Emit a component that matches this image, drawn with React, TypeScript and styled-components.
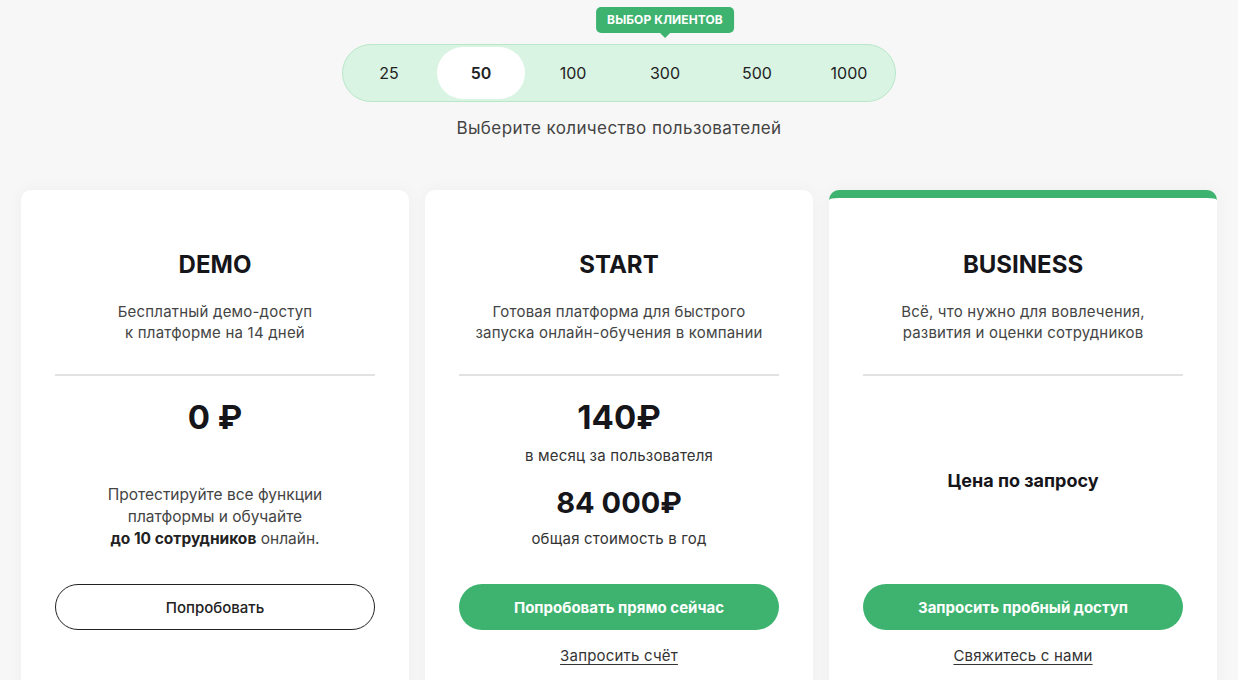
import { useState } from "react";
import styled, { createGlobalStyle } from "styled-components";

const GREEN = "#3db36f";

const GlobalStyle = createGlobalStyle`
  * { box-sizing: border-box; }
  body {
    margin: 0;
    background: #f7f7f7;
    font-family: Inter, "Noto Sans", sans-serif;
    color: #1c1c1c;
  }
`;

const Page = styled.div`
  padding: 44px 21px 0;
  display: flex;
  flex-direction: column;
  align-items: center;
  height: 680px;
  overflow: hidden;
`;

const Switcher = styled.div`
  display: flex;
  padding: 2px 0;
  border: 1px solid #b9e7c9;
  border-radius: 30px;
  background: #d9f4e2;
`;

const Option = styled.button<{ active?: boolean }>`
  position: relative;
  width: 88px;
  height: 52px;
  margin: 0 2px;
  border: none;
  border-radius: 26px;
  background: ${(p) => (p.active ? "#fff" : "transparent")};
  font-family: inherit;
  font-size: 16px;
  font-weight: ${(p) => (p.active ? 600 : 400)};
  color: #222;
  cursor: pointer;
`;

const Badge = styled.span`
  position: absolute;
  left: 50%;
  bottom: calc(100% + 14px);
  transform: translateX(-50%);
  white-space: nowrap;
  padding: 0 11px;
  height: 26px;
  line-height: 26px;
  border-radius: 5px;
  background: ${GREEN};
  color: #fff;
  font-size: 12px;
  font-weight: 700;
  letter-spacing: 0.1px;

  &::after {
    content: "";
    position: absolute;
    left: 50%;
    top: 100%;
    transform: translateX(-50%);
    border-left: 5px solid transparent;
    border-right: 5px solid transparent;
    border-top: 5px solid ${GREEN};
  }
`;

const Hint = styled.p`
  margin: 16px 0 0;
  font-size: 17px;
  letter-spacing: 0.4px;
  color: #444;
`;

const Grid = styled.div`
  width: 1196px;
  margin-top: 52px;
  display: grid;
  grid-template-columns: repeat(3, 1fr);
  gap: 16px;
`;

const Card = styled.div<{ featured?: boolean }>`
  background: #fff;
  border-radius: 10px;
  border-top: ${(p) => (p.featured ? `8px solid ${GREEN}` : "none")};
  padding: ${(p) => (p.featured ? 52 : 60)}px 34px 40px;
  box-shadow: 0 0 18px rgba(0, 0, 0, 0.04);
  display: flex;
  flex-direction: column;
  align-items: center;
  text-align: center;
  height: 540px;
`;

const Title = styled.h2`
  margin: 0;
  font-size: 24px;
  line-height: 30px;
  font-weight: 700;
  color: #15151a;
`;

const Lead = styled.p`
  margin: 21px 0 0;
  font-size: 15px;
  line-height: 21px;
  letter-spacing: 0.2px;
  color: #444;
`;

const Divider = styled.hr`
  width: 100%;
  margin: 31px 0 0;
  border: none;
  height: 2px;
  background: #e2e2e2;
`;

const Body = styled.div<{ centered?: boolean }>`
  height: 208px;
  width: 100%;
  display: flex;
  flex-direction: column;
  align-items: center;
  justify-content: ${(p) => (p.centered ? "center" : "flex-start")};
  padding-top: ${(p) => (p.centered ? 0 : 21)}px;
`;

const Price = styled.div<{ small?: boolean }>`
  font-size: ${(p) => (p.small ? 29 : 33)}px;
  line-height: ${(p) => (p.small ? 34 : 40)}px;
  font-weight: 700;
  color: #15151a;
  margin-top: ${(p) => (p.small ? 20 : 0)}px;
`;

const Caption = styled.div`
  margin-top: 9px;
  font-size: 15px;
  line-height: 20px;
  letter-spacing: 0.2px;
  color: #333;
`;

const Note = styled.p`
  margin: 47px 0 0;
  font-size: 15.5px;
  line-height: 22px;
  color: #444;

  b {
    color: #222;
    font-weight: 700;
  }
`;

const OnRequest = styled.div`
  font-size: 18px;
  font-weight: 700;
  color: #15151a;
`;

const Action = styled.button<{ outline?: boolean }>`
  width: 100%;
  height: 46px;
  border-radius: 23px;
  border: ${(p) => (p.outline ? "1px solid #222" : "none")};
  background: ${(p) => (p.outline ? "#fff" : GREEN)};
  color: ${(p) => (p.outline ? "#222" : "#fff")};
  font-family: inherit;
  font-size: 15px;
  font-weight: ${(p) => (p.outline ? 500 : 700)};
  cursor: pointer;
`;

const Link = styled.a`
  margin-top: 16px;
  font-size: 15px;
  line-height: 20px;
  letter-spacing: 0.2px;
  color: #333;
  text-decoration: underline;
  text-underline-offset: 3px;
`;

const counts = [25, 50, 100, 300, 500, 1000];

export default function App() {
  const [count, setCount] = useState(50);

  return (
    <>
      <GlobalStyle />
      <Page>
        <Switcher>
          {counts.map((n) => (
            <Option key={n} active={n === count} onClick={() => setCount(n)}>
              {n === 300 && <Badge>ВЫБОР КЛИЕНТОВ</Badge>}
              {n}
            </Option>
          ))}
        </Switcher>
        <Hint>Выберите количество пользователей</Hint>

        <Grid>
          <Card>
            <Title>DEMO</Title>
            <Lead>
              Бесплатный демо-доступ
              <br />к платформе на 14 дней
            </Lead>
            <Divider />
            <Body>
              <Price>0 ₽</Price>
              <Note>
                Протестируйте все функции
                <br />
                платформы и обучайте
                <br />
                <b>до 10 сотрудников</b> онлайн.
              </Note>
            </Body>
            <Action outline>Попробовать</Action>
          </Card>

          <Card>
            <Title>START</Title>
            <Lead>
              Готовая платформа для быстрого
              <br />
              запуска онлайн-обучения в компании
            </Lead>
            <Divider />
            <Body>
              <Price>140₽</Price>
              <Caption>в месяц за пользователя</Caption>
              <Price small>84 000₽</Price>
              <Caption>общая стоимость в год</Caption>
            </Body>
            <Action>Попробовать прямо сейчас</Action>
            <Link href="#">Запросить счёт</Link>
          </Card>

          <Card featured>
            <Title>BUSINESS</Title>
            <Lead>
              Всё, что нужно для вовлечения,
              <br />
              развития и оценки сотрудников
            </Lead>
            <Divider />
            <Body centered>
              <OnRequest>Цена по запросу</OnRequest>
            </Body>
            <Action>Запросить пробный доступ</Action>
            <Link href="#">Свяжитесь с нами</Link>
          </Card>
        </Grid>
      </Page>
    </>
  );
}
